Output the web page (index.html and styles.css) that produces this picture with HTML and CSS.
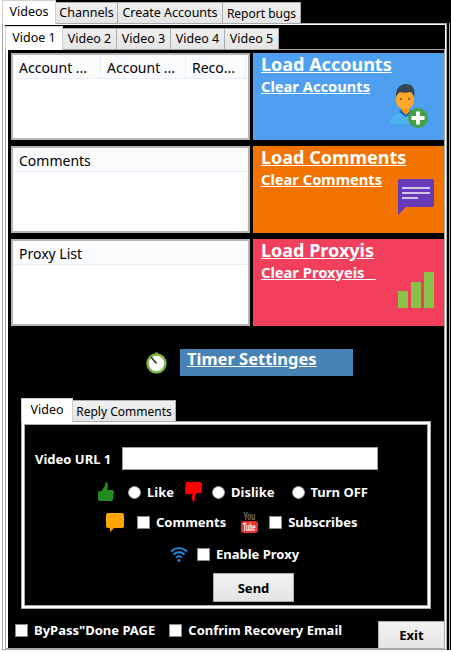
FILE: index.html
```html
<!DOCTYPE html>
<html lang="en">
<head>
<meta charset="utf-8">
<title>Videos</title>
<link rel="stylesheet" href="styles.css">
</head>
<body>
<div class="window">
  <div class="tabs top-tabs">
    <div class="tab active t-videos">Videos</div>
    <div class="tab t-channels">Channels</div>
    <div class="tab t-create">Create Accounts</div>
    <div class="tab t-report">Report bugs</div>
  </div>
  <div class="frame">
    <div class="panel">
      <div class="tabs video-tabs">
        <div class="tab active t-v1">Vidoe 1</div>
        <div class="tab t-v">Video 2</div>
        <div class="tab t-v">Video 3</div>
        <div class="tab t-v">Video 4</div>
        <div class="tab t-v">Video 5</div>
      </div>
      <div class="body">
        <div class="cards">
          <div class="list">
            <div class="list-head">
              <div class="col c1">Account ...</div>
              <div class="col c2">Account ...</div>
              <div class="col c3">Reco...</div>
            </div>
          </div>
          <div class="action blue">
            <a class="load">Load Accounts</a>
            <a class="clear">Clear Accounts</a>
            <svg class="art art-person" width="38" height="44" viewBox="0 0 38 44">
              <path d="M0 40c0-7 5-11 11-12h9c6 1 10 5 10 12z" fill="#4fb3f0"/>
              <path d="M9 28l7 5 7-5-2-2H11z" fill="#1565c0"/>
              <path d="M12 21h8v6l-4 4-4-4z" fill="#ff9800"/>
              <rect x="6" y="7" width="18" height="18" rx="8" fill="#ffa726"/>
              <path d="M6 13C5 4 11 0 16 0c6 0 10 4 8 13-1-3-2-5-4-5-3 1-8 1-10 0-2 1-3 3-4 5z" fill="#37474f"/>
              <circle cx="11" cy="15" r="1" fill="#784719"/>
              <circle cx="19" cy="15" r="1" fill="#784719"/>
              <circle cx="28" cy="34" r="10" fill="#43a047"/>
              <path d="M26 27.500h4v4.500h4.500v4H30v4.500h-4V36h-4.500v-4H26z" fill="#fff"/>
            </svg>
          </div>
          <div class="list">
            <div class="list-head"><div class="col">Comments</div></div>
          </div>
          <div class="action orange">
            <a class="load">Load Comments</a>
            <a class="clear">Clear Comments</a>
            <svg class="art art-chat" width="36" height="36" viewBox="0 0 36 36">
              <path d="M2 0h32a2 2 0 0 1 2 2v24a2 2 0 0 1-2 2H8l-8 8V2a2 2 0 0 1 2-2z" fill="#673ab7"/>
              <path d="M4 8h28v2H4zM4 13h28v2H4zM4 18h16v2H4z" fill="#d1c4e9"/>
            </svg>
          </div>
          <div class="list">
            <div class="list-head"><div class="col">Proxy List</div></div>
          </div>
          <div class="action red">
            <a class="load">Load Proxyis</a>
            <a class="clear">Clear Proxyeis&nbsp;&nbsp;&nbsp;</a>
            <svg class="art art-bars" width="36" height="36" viewBox="0 0 36 36">
              <path d="M0 19h10v17H0zM13 10h10v26H13zM26 0h10v36H26z" fill="#8bc34a"/>
            </svg>
          </div>
        </div>

        <div class="timer">
          <svg class="clock" width="21" height="22" viewBox="0 0 21 22">
            <circle cx="10.500" cy="11.500" r="9" fill="#fff" stroke="#7cb342" stroke-width="2.500"/>
            <rect x="9" y="0.500" width="3" height="2" fill="#7cb342"/>
            <path d="M5 5l5.500 6.500" stroke="#263238" stroke-width="1.600"/>
          </svg>
          <div class="timer-bar"><a class="timer-link">Timer Settinges</a></div>
        </div>

        <div class="sub">
          <div class="tabs sub-tabs">
            <div class="tab active t-video">Video</div>
            <div class="tab t-reply">Reply Comments</div>
          </div>
          <div class="sub-panel">
            <div class="row row-url">
              <label class="lbl url-lbl">Video URL 1</label>
              <input class="url" type="text">
            </div>
            <div class="row row-like">
              <svg class="ic" width="16" height="20" viewBox="0 0 16 20">
                <path d="M0 9.500l3.500-.5L7 3.500 7.500 0c2 0 2.500 2 2.500 3.500S9.500 6.500 9 8h5.500c1 0 1.500 1 1.500 2l-1 7.500c0 1-1 1.500-2 1.500H2a2 2 0 0 1-2-2z" fill="#228b22"/>
              </svg>
              <input class="radio m-like-r" type="radio" name="r">
              <label class="lbl m6">Like</label>
              <svg class="ic m-dis" width="17" height="20" viewBox="0 0 17 20">
                <path d="M2 0h12c2 0 3 1 3 2v7c0 1.500-1 2-2 2h-3l-2 3-.5 6C7.500 20 7 17 7 15c0-1.500.5-3 .5-3H2c-1.500 0-2-1-2-2L.5 2C.5 1 1 0 2 0z" fill="#f00"/>
              </svg>
              <input class="radio m10" type="radio" name="r">
              <label class="lbl m6">Dislike</label>
              <input class="radio m-off" type="radio" name="r">
              <label class="lbl m6">Turn OFF</label>
            </div>
            <div class="row row-check">
              <svg class="ic" width="18" height="19" viewBox="0 0 18 19">
                <path d="M2 0h14a2 2 0 0 1 2 2v11a2 2 0 0 1-2 2H8l-4 4v-4H2a2 2 0 0 1-2-2V2a2 2 0 0 1 2-2z" fill="#ffa500"/>
              </svg>
              <input class="check m13" type="checkbox">
              <label class="lbl m6">Comments</label>
              <svg class="ic m-yt" width="17" height="21" viewBox="0 0 17 21">
                <text class="yt-you" transform="translate(2.400 8) scale(.65 1)">You</text>
                <rect x="0" y="9" width="17" height="12" rx="3" fill="#e0392f"/>
                <text class="yt-tube" transform="translate(2 19) scale(.54 1)">Tube</text>
              </svg>
              <input class="check m11" type="checkbox">
              <label class="lbl m6">Subscribes</label>
            </div>
            <div class="row row-proxy">
              <svg class="ic" width="18" height="16" viewBox="0 0 18 16">
                <path d="M1 5.500C5.500 1 12.500 1 17 5.500M3.500 8.500c3.200-3 7.800-3 11 0M6 11.500c1.800-1.600 4.200-1.600 6 0" fill="none" stroke="#1e88e5" stroke-width="1.800"/>
                <circle cx="9" cy="14.500" r="1.500" fill="#1e88e5"/>
              </svg>
              <input class="check m9" type="checkbox">
              <label class="lbl m6">Enable Proxy</label>
            </div>
            <div class="row row-send"><button class="btn send" type="button">Send</button></div>
          </div>
        </div>

        <div class="footer">
          <div class="footer-opts">
            <input class="check" type="checkbox">
            <label class="lbl m6">ByPass"Done PAGE</label>
            <input class="check m14" type="checkbox">
            <label class="lbl m6">Confrim Recovery Email</label>
          </div>
          <button class="btn exit" type="button">Exit</button>
        </div>
      </div>
    </div>
    <div class="edge"></div>
  </div>
</div>
</body>
</html>
```
FILE: styles.css
```css
* { box-sizing: border-box; }
html, body { margin: 0; padding: 0; background: #fff; }
body { width: 451px; height: 652px; overflow: hidden; font-family: "Noto Sans", sans-serif; font-size: 12px; color: #000; }
.window { width: 451px; height: 652px; display: flex; flex-direction: column; background: #fff; }

.tabs { display: flex; align-items: flex-end; }
.tab { display: flex; align-items: center; justify-content: center; height: 21px; padding-top: 1px; background: linear-gradient(#f0f0f0, #e5e5e5); border: 1px solid #acacac; border-bottom: 0; margin-right: -1px; font-size: 12.5px; line-height: 1; white-space: nowrap; }
.tab.active { height: 24px; background: #fff; border-color: #d0d0d0; position: relative; z-index: 1; margin-bottom: -1px; padding-top: 0; padding-bottom: 1px; }

.top-tabs { height: 23px; padding-left: 2px; background: linear-gradient(90deg, #fff 2px, #000 2px); flex: none; }
.t-videos { width: 54px; }
.t-channels { width: 63px; }
.t-create { width: 106px; }
.t-report { width: 79px; margin-right: 0; font-size: 12px; }

.frame { display: flex; height: 627px; padding-left: 2px; flex: none; }
.panel { width: 445px; height: 627px; border: 1px solid #a8a8a8; padding: 1px 1px 1px 2px; background: #fff; display: flex; flex-direction: column; }
.edge { width: 4px; height: 627px; background: linear-gradient(90deg, #000 2px, #bca77e 2px, #bca77e 3px, #000 3px); }

.video-tabs { height: 24px; background: #000; flex: none; }
.t-v1 { width: 58px; }
.t-v { width: 55px; }

.body { flex: 1; border: 1px solid #a8a8a8; background: #000; padding: 3px 0 0 5px; box-shadow: inset 2px 0 0 #fff; }

.cards { display: grid; grid-template-columns: 239px 191px; grid-auto-rows: 87px; column-gap: 3px; row-gap: 6px; }
.list { background: #fff; border: 2px solid #b4b4b4; }
.list-head { display: flex; height: 24px; background: #fbfcfe; border-bottom: 1px solid #e6eefa; font-size: 14px; line-height: 25px; }
.col { padding-left: 6px; white-space: nowrap; }
.c1 { width: 88px; border-right: 1px solid #e6eefa; }
.c2 { width: 85px; border-right: 1px solid #e6eefa; }
.c3 { width: 60px; border-right: 1px solid #e6eefa; }

.action { position: relative; padding: 0 0 0 8px; display: flex; flex-direction: column; align-items: flex-start; color: #fff; }
.blue { background: #4f9ff0; }
.orange { background: #f27300; }
.red { background: #f23f5b; }
.load, .clear, .timer-link { font-family: "Noto Sans", sans-serif; font-weight: 700; text-decoration: underline; color: #fff; white-space: pre; }
.load { font-size: 18px; line-height: 23px; }
.clear { font-size: 14.700px; line-height: 18px; margin-top: 1px; }
.art { position: absolute; }
.art-person { right: 16px; bottom: 12px; }
.art-chat { right: 10px; bottom: 18px; }
.art-bars { right: 10px; bottom: 18px; }

.timer { display: flex; align-items: center; margin-top: 23px; padding-left: 135px; }
.clock { margin-right: 13px; flex: none; }
.timer-bar { width: 173px; height: 27px; background: #4682b4; padding-left: 7px; line-height: 20px; }
.timer-link { font-size: 16.500px; }

.sub { margin: 21px 0 0 10px; width: 410px; }
.sub-tabs { height: 24px; }
.t-video { width: 52px; }
.t-reply { width: 104px; font-size: 12px; }
.sub-panel { height: 188px; background: #000; border: 1px solid #a8a8a8; box-shadow: inset 0 0 0 2px #fff, inset 0 0 0 3px #a8a8a8; display: flex; flex-direction: column; }

.row { display: flex; align-items: center; }
.row-url { padding-left: 13px; margin-top: 25px; height: 23px; }
.url-lbl { width: 87px; }
.url { width: 256px; height: 23px; border: 1px solid #a0a0a0; background: #fff; padding: 0; }
.row-like { padding-left: 76px; margin-top: 11px; height: 22px; }
.row-check { padding-left: 84px; margin-top: 8px; height: 22px; }
.row-proxy { padding-left: 148px; margin-top: 12px; height: 18px; }
.row-send { padding-left: 191px; margin-top: 10px; }

.lbl { font-family: "Noto Sans", sans-serif; font-weight: 700; font-size: 13px; color: #fff; white-space: nowrap; }
.ic { flex: none; display: block; }
.radio, .check { appearance: none; -webkit-appearance: none; width: 13px; height: 13px; margin: 0; background: #fff; flex: none; }
.radio { border-radius: 50%; border: 1px solid #9a9a9a; }
.check { border: 1px solid #8a8a8a; }
.m6 { margin-left: 6px; }
.m9 { margin-left: 9px; }
.m10 { margin-left: 10px; }
.m11 { margin-left: 11px; }
.m13 { margin-left: 13px; }
.m14 { margin-left: 14px; }
.m-like-r { margin-left: 14px; }
.m-dis { margin-left: 11px; }
.m-off { margin-left: 17px; }
.m-yt { margin-left: 15px; }
.yt-you { font-family: "Liberation Sans", sans-serif; font-size: 10px; font-weight: 700; fill: #777; }
.yt-tube { font-family: "Liberation Sans", sans-serif; font-size: 10px; font-weight: 700; fill: #fff; }

.btn { font-family: "Noto Sans", sans-serif; font-weight: 700; font-size: 13px; color: #000; background: linear-gradient(#f2f2f2, #e4e4e4); border: 1px solid #adadad; padding: 0; }
.send { width: 81px; height: 29px; }
.footer { display: flex; align-items: flex-start; height: 27px; margin-top: 12px; padding-left: 4px; }
.footer-opts { display: flex; align-items: center; height: 18px; }
.exit { width: 66px; height: 27px; margin-left: auto; border-bottom: 0; border-right: 0; }
```
